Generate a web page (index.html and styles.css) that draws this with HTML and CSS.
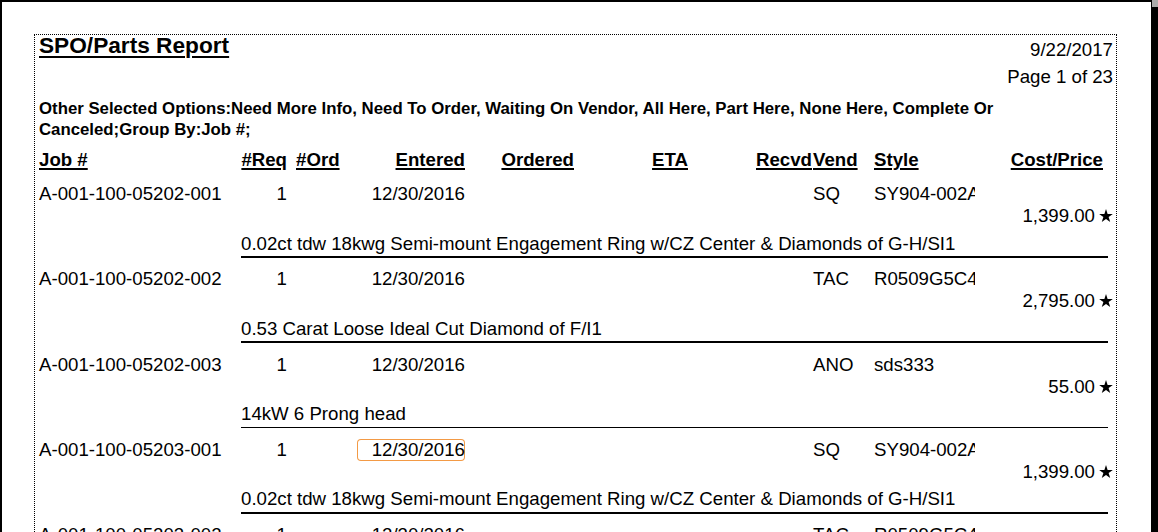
FILE: index.html
```html
<!DOCTYPE html>
<html lang="en">
<head>
<meta charset="utf-8">
<title>SPO/Parts Report</title>
<link rel="stylesheet" href="styles.css">
</head>
<body>
<div class="page">
  <div class="report">
    <header class="report-head">
      <h1 class="title">SPO/Parts Report</h1>
      <div class="meta">
        <div>9/22/2017</div>
        <div>Page 1 of 23</div>
      </div>
    </header>
    <p class="options">Other Selected Options:Need More Info, Need To Order, Waiting On Vendor, All Here, Part Here, None Here, Complete Or<br>Canceled;Group By:Job #;</p>

    <div class="cols col-head">
      <span>Job #</span>
      <span class="r">#Req</span>
      <span class="ord">#Ord</span>
      <span class="r">Entered</span>
      <span class="r">Ordered</span>
      <span class="r">ETA</span>
      <span class="r">Recvd</span>
      <span class="vend">Vend</span>
      <span class="style">Style</span>
      <span class="r">Cost/Price</span>
    </div>

    <div class="rows">
      <div class="group">
        <div class="cols">
          <span>A-001-100-05202-001</span><span class="r">1</span><span class="ord"></span><span class="r">12/30/2016</span><span class="r"></span><span class="r"></span><span class="r"></span><span class="vend">SQ</span><span class="style">SY904-002A</span><span class="r"></span>
        </div>
        <div class="price">1,399.00<svg class="star" viewBox="0 0 14 13.3" aria-hidden="true"><polygon points="7,0 8.65,5.09 14,5.09 9.67,8.23 11.33,13.31 7,10.17 2.67,13.31 4.33,8.23 0,5.09 5.35,5.09"/></svg></div>
        <div class="desc">0.02ct tdw 18kwg Semi-mount Engagement Ring w/CZ Center &amp; Diamonds of G-H/SI1</div>
        <div class="rule"></div>
      </div>

      <div class="group">
        <div class="cols">
          <span>A-001-100-05202-002</span><span class="r">1</span><span class="ord"></span><span class="r">12/30/2016</span><span class="r"></span><span class="r"></span><span class="r"></span><span class="vend">TAC</span><span class="style">R0509G5C4W</span><span class="r"></span>
        </div>
        <div class="price">2,795.00<svg class="star" viewBox="0 0 14 13.3" aria-hidden="true"><polygon points="7,0 8.65,5.09 14,5.09 9.67,8.23 11.33,13.31 7,10.17 2.67,13.31 4.33,8.23 0,5.09 5.35,5.09"/></svg></div>
        <div class="desc">0.53 Carat Loose Ideal Cut Diamond of F/I1</div>
        <div class="rule"></div>
      </div>

      <div class="group">
        <div class="cols">
          <span>A-001-100-05202-003</span><span class="r">1</span><span class="ord"></span><span class="r">12/30/2016</span><span class="r"></span><span class="r"></span><span class="r"></span><span class="vend">ANO</span><span class="style">sds333</span><span class="r"></span>
        </div>
        <div class="price">55.00<svg class="star" viewBox="0 0 14 13.3" aria-hidden="true"><polygon points="7,0 8.65,5.09 14,5.09 9.67,8.23 11.33,13.31 7,10.17 2.67,13.31 4.33,8.23 0,5.09 5.35,5.09"/></svg></div>
        <div class="desc">14kW 6 Prong head</div>
        <div class="rule thin"></div>
      </div>

      <div class="group">
        <div class="cols">
          <span>A-001-100-05203-001</span><span class="r">1</span><span class="ord"></span><span class="r sel">12/30/2016</span><span class="r"></span><span class="r"></span><span class="r"></span><span class="vend">SQ</span><span class="style">SY904-002A</span><span class="r"></span>
        </div>
        <div class="price">1,399.00<svg class="star" viewBox="0 0 14 13.3" aria-hidden="true"><polygon points="7,0 8.65,5.09 14,5.09 9.67,8.23 11.33,13.31 7,10.17 2.67,13.31 4.33,8.23 0,5.09 5.35,5.09"/></svg></div>
        <div class="desc">0.02ct tdw 18kwg Semi-mount Engagement Ring w/CZ Center &amp; Diamonds of G-H/SI1</div>
        <div class="rule"></div>
      </div>

      <div class="group">
        <div class="cols">
          <span>A-001-100-05203-002</span><span class="r">1</span><span class="ord"></span><span class="r">12/30/2016</span><span class="r"></span><span class="r"></span><span class="r"></span><span class="vend">TAC</span><span class="style">R0509G5C4W</span><span class="r"></span>
        </div>
        <div class="price">2,795.00<svg class="star" viewBox="0 0 14 13.3" aria-hidden="true"><polygon points="7,0 8.65,5.09 14,5.09 9.67,8.23 11.33,13.31 7,10.17 2.67,13.31 4.33,8.23 0,5.09 5.35,5.09"/></svg></div>
        <div class="desc">0.53 Carat Loose Ideal Cut Diamond of F/I1</div>
        <div class="rule"></div>
      </div>
    </div>
  </div>
</div>
</body>
</html>
```

FILE: styles.css
```css
html, body {
  margin: 0;
  height: 100%;
}

body {
  background: #ababab;
  overflow: hidden;
  font-family: "Liberation Sans", Arial, sans-serif;
  color: #000;
}

.page {
  width: 1152px;
  height: 1400px;
  box-sizing: border-box;
  background: #fff;
  border-style: solid;
  border-color: #000;
  border-width: 2px 1px 1px 2px;
  box-shadow: 7px 7px 0 #000;
  padding: 32px 0 0 32px;
}

.report {
  width: 1083px;
  min-height: 1200px;
  box-sizing: border-box;
  border: 1px dotted #000;
  padding: 0 3px 0 4px;
}

.report-head {
  display: flex;
  justify-content: space-between;
  align-items: flex-start;
}

.title {
  margin: 0;
  font-size: 22.67px;
  font-weight: bold;
  line-height: 20px;
  text-decoration: underline;
  text-decoration-thickness: 2px;
  text-underline-offset: 3px;
}

.meta {
  margin-top: 1px;
  font-size: 18.67px;
  line-height: 27px;
  text-align: right;
}

.options {
  margin: 7.5px 0 0;
  font-size: 16.8px;
  font-weight: bold;
  line-height: 21px;
  white-space: nowrap;
}

.cols {
  display: grid;
  grid-template-columns: 202px 46px 70px 108px 109px 114px 124px 62px 101px 128px;
  font-size: 18.67px;
  line-height: 22px;
  white-space: nowrap;
}

.col-head {
  margin-top: 9.5px;
  font-weight: bold;
}

.col-head span {
  text-decoration: underline;
  text-decoration-thickness: 2px;
  text-underline-offset: 2px;
}

.r {
  text-align: right;
}

.ord {
  padding-left: 9px;
}

.vend {
  padding-left: 1px;
}

.style {
  overflow: hidden;
}

.sel {
  border-radius: 4px;
  box-shadow: inset 0 0 0 1px #f39a45;
}

.rows {
  padding-top: 12px;
}

.group {
  height: 85.333px;
}

.price {
  font-size: 18.67px;
  line-height: 22px;
  text-align: right;
  white-space: nowrap;
}

.star {
  width: 14px;
  height: 13px;
  margin-left: 4px;
  vertical-align: baseline;
  fill: #000;
}

.desc {
  margin-top: 5.5px;
  padding-left: 202px;
  font-size: 18.67px;
  line-height: 22px;
  white-space: nowrap;
}

.rule {
  margin: 1.5px 0 0 202px;
  width: 867px;
  height: 2px;
  background: #000;
}

.rule.thin {
  height: 1px;
}
```
